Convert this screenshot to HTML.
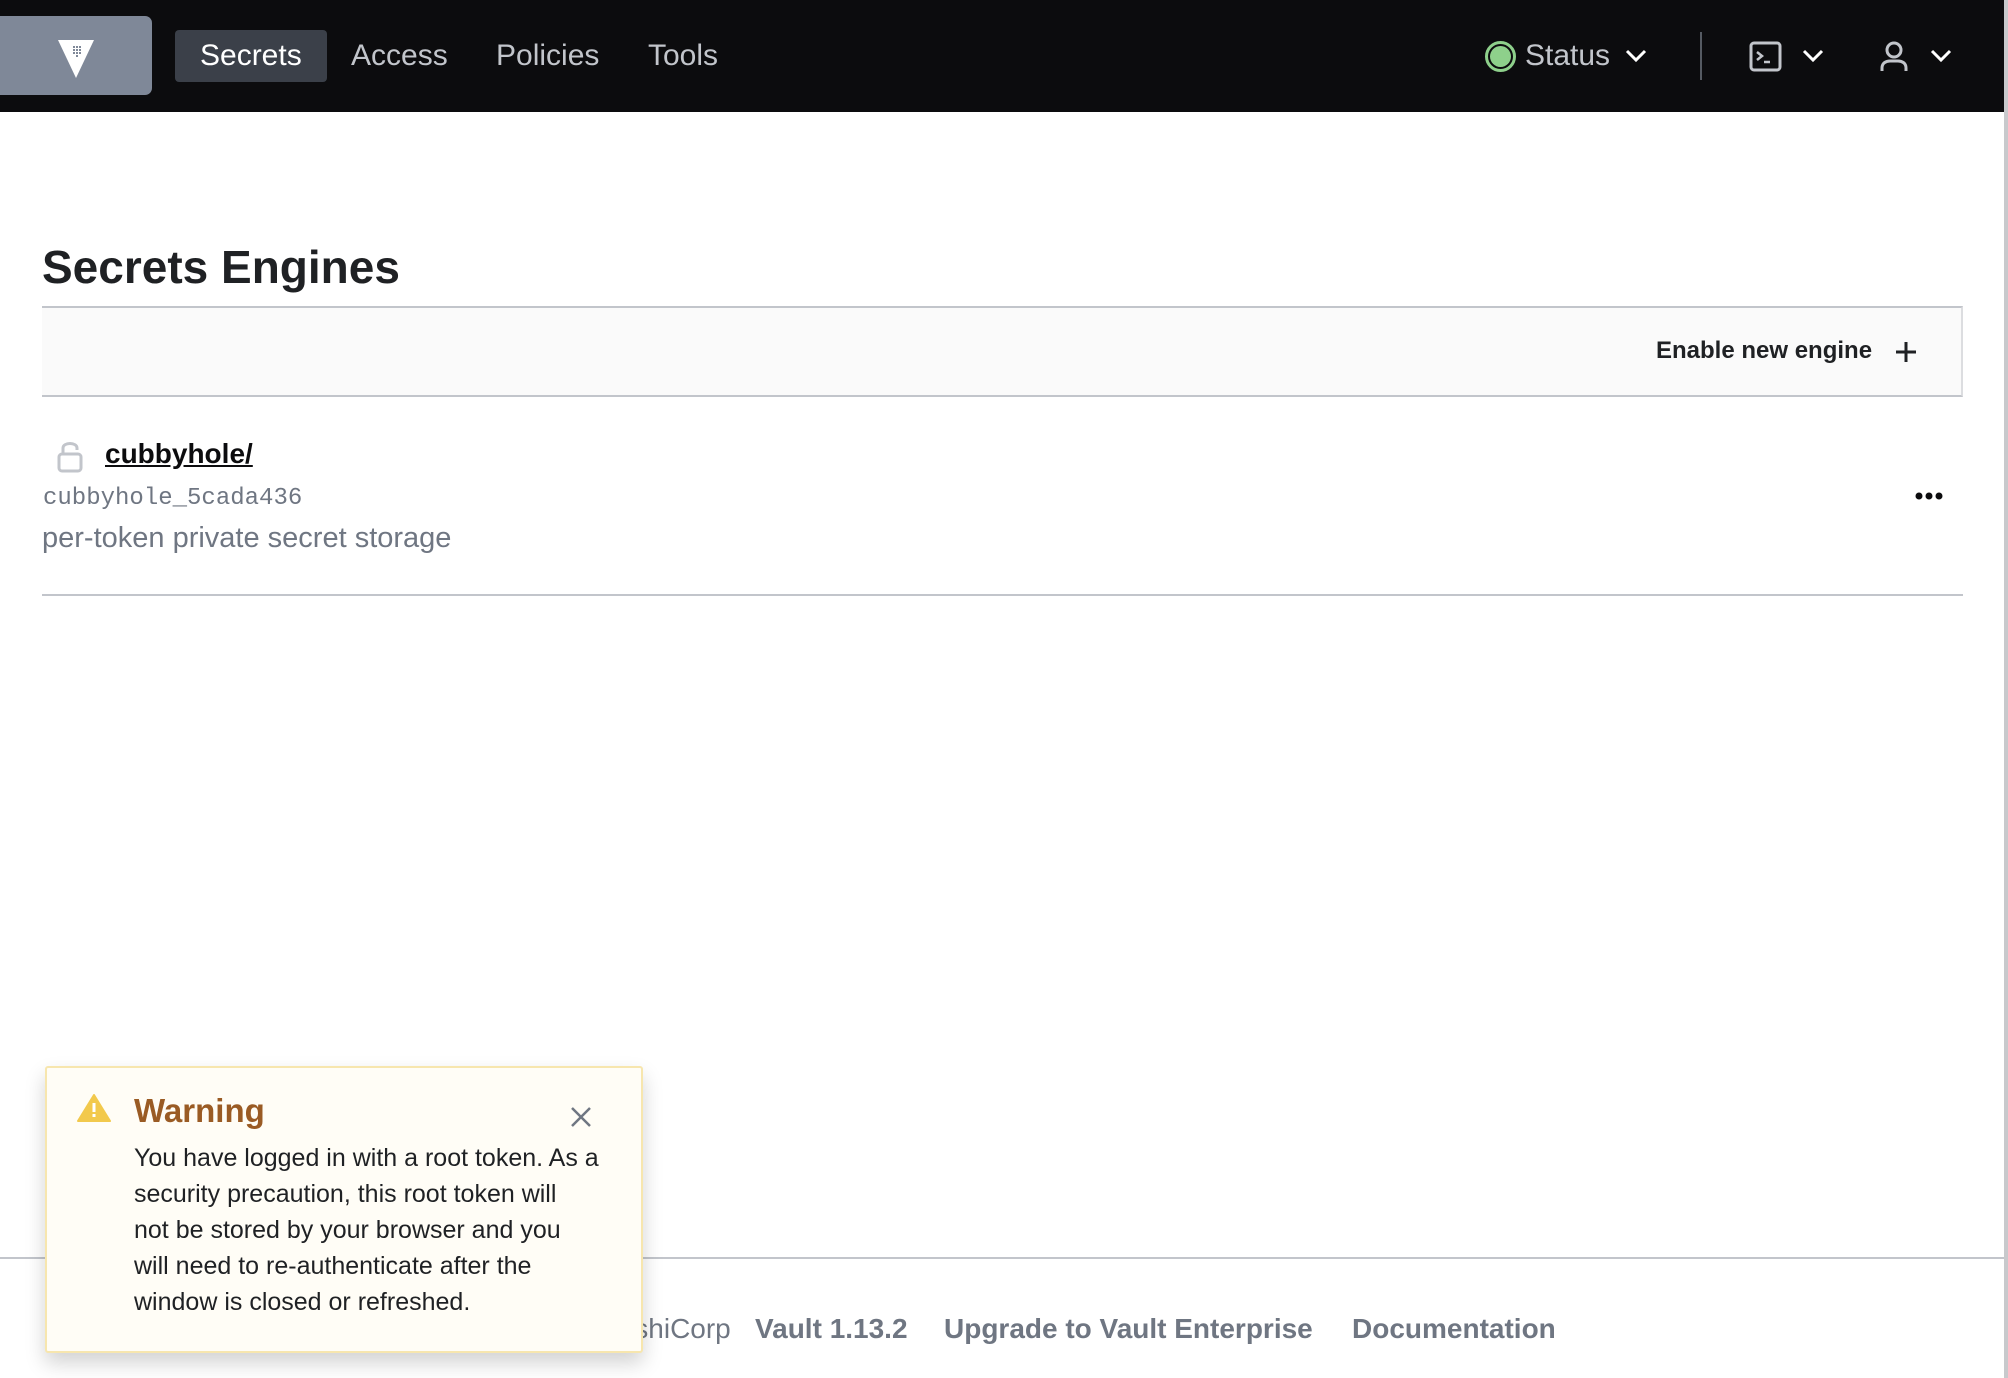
<!DOCTYPE html>
<html><head><meta charset="utf-8"><style>
*{margin:0;padding:0;box-sizing:border-box}
body{width:2008px;height:1378px;position:relative;overflow:hidden;background:#fff;font-family:"Liberation Sans",sans-serif;color:#1f2124}
.a{position:absolute;white-space:nowrap}
.nav{position:absolute;left:0;top:0;width:2004px;height:112px;background:#0c0c0e}
.edge{position:absolute;left:2004px;top:0;width:4px;height:1378px;background:#c8c9cc}
.nt{color:#c2c5cb;font-size:30px;top:39px}
</style></head><body>
<div class="nav">
 <div class="a" style="left:0;top:16px;width:152px;height:79px;background:#7f8898;border-radius:0 7px 7px 0"></div>
 <svg class="a" style="left:56px;top:38px" width="40" height="42" viewBox="0 0 40 42"><path d="M2 2H38L20 40Z" fill="#fff"/><g fill="#7f8898"><rect x="17" y="8" width="2" height="2"/><rect x="20" y="8" width="2" height="2"/><rect x="23" y="8" width="2" height="2"/><rect x="17" y="11" width="2" height="2"/><rect x="20" y="11" width="2" height="2"/><rect x="23" y="11" width="2" height="2"/><rect x="17" y="14" width="2" height="2"/><rect x="20" y="14" width="2" height="2"/><rect x="23" y="14" width="2" height="2"/><rect x="20" y="17" width="2" height="2"/></g></svg>
 <div class="a" style="left:175px;top:30px;width:152px;height:52px;background:#3b4049;border-radius:4px"></div>
 <div class="a nt" style="left:200px;color:#fff">Secrets</div>
 <div class="a nt" style="left:351px">Access</div>
 <div class="a nt" style="left:496px">Policies</div>
 <div class="a nt" style="left:648px">Tools</div>
 <div class="a" style="left:1485px;top:41px;width:31px;height:31px;border-radius:50%;border:3px solid #8ed08b;background:#0c0c0e"></div>
 <div class="a" style="left:1490px;top:46px;width:21px;height:21px;border-radius:50%;background:#8ed08b"></div>
 <div class="a nt" style="left:1525px">Status</div>
 <svg class="a" style="left:1624px;top:46px" width="24" height="18"><path d="M3 5L12 14L21 5" stroke="#fff" stroke-width="3" fill="none"/></svg>
 <div class="a" style="left:1700px;top:32px;width:2px;height:48px;background:#555a62"></div>
 <svg class="a" style="left:1749px;top:41px" width="34" height="31"><rect x="2" y="2" width="29" height="27" rx="3" stroke="#c2c5cb" stroke-width="3" fill="none"/><path d="M8 11L13 15L8 19M15 21H21" stroke="#c2c5cb" stroke-width="2.5" fill="none"/></svg>
 <svg class="a" style="left:1801px;top:46px" width="24" height="18"><path d="M3 5L12 14L21 5" stroke="#fff" stroke-width="3" fill="none"/></svg>
 <svg class="a" style="left:1878px;top:40px" width="32" height="32"><circle cx="16" cy="10" r="7" stroke="#c2c5cb" stroke-width="3" fill="none"/><path d="M4 31V28C4 23 8 21 12 21H20C24 21 28 23 28 28V31" stroke="#c2c5cb" stroke-width="3" fill="none"/></svg>
 <svg class="a" style="left:1929px;top:46px" width="24" height="18"><path d="M3 5L12 14L21 5" stroke="#fff" stroke-width="3" fill="none"/></svg>
</div>
<div class="edge"></div>
<div class="a" style="left:42px;top:240px;font-size:46px;font-weight:bold;color:#1f2124">Secrets Engines</div>
<div class="a" style="left:42px;top:306px;width:1921px;height:91px;background:#fafafa;border-top:2px solid #c2c5cb;border-bottom:2px solid #c2c5cb;border-right:2px solid #dcdde0"></div>
<div class="a" style="left:1656px;top:337px;font-size:24px;font-weight:bold;color:#1f2124">Enable new engine</div>
<svg class="a" style="left:1894px;top:340px" width="24" height="24"><path d="M12 2V22M2 12H22" stroke="#1f2124" stroke-width="3"/></svg>
<svg class="a" style="left:56px;top:439px" width="28" height="34"><path d="M7 14V9C7 3 21 3 21 9V11" stroke="#c2c5cb" stroke-width="3" fill="none"/><rect x="3" y="15" width="22" height="17" rx="3" stroke="#c2c5cb" stroke-width="3" fill="none"/></svg>
<div class="a" style="left:105px;top:438px;font-size:28px;font-weight:bold;text-decoration:underline;color:#0c0c0e">cubbyhole/</div>
<div class="a" style="left:43px;top:485px;font-family:'Liberation Mono',monospace;font-size:24px;color:#6f7682">cubbyhole_5cada436</div>
<div class="a" style="left:42px;top:522px;font-size:29px;color:#6f7682">per-token private secret storage</div>
<svg class="a" style="left:1915px;top:490px" width="28" height="12"><circle cx="4" cy="6" r="3.5" fill="#0c0c0e"/><circle cx="14" cy="6" r="3.5" fill="#0c0c0e"/><circle cx="24" cy="6" r="3.5" fill="#0c0c0e"/></svg>
<div class="a" style="left:42px;top:594px;width:1921px;height:2px;background:#c2c5cb"></div>
<div class="a" style="left:0;top:1257px;width:2004px;height:2px;background:#c2c5cb"></div>
<div class="a" style="left:500px;top:1313px;font-size:28px;color:#6f7682">© 2023 HashiCorp</div>
<div class="a" style="left:755px;top:1313px;font-size:28px;font-weight:bold;color:#6f7682">Vault 1.13.2</div>
<div class="a" style="left:944px;top:1313px;font-size:28px;font-weight:bold;color:#6f7682">Upgrade to Vault Enterprise</div>
<div class="a" style="left:1352px;top:1313px;font-size:28px;font-weight:bold;color:#6f7682">Documentation</div>
<div class="a" style="left:45px;top:1066px;width:598px;height:287px;background:#fffdf6;border:2px solid #f7e6ae;border-radius:3px;box-shadow:0 10px 20px rgba(0,0,0,.18)"></div>
<svg class="a" style="left:77px;top:1093px" width="34" height="30"><path d="M17 2L33 28H1Z" fill="#f2c94c" stroke="#f2c94c" stroke-width="2" stroke-linejoin="round"/><rect x="15.5" y="10" width="3" height="9" fill="#fff"/><rect x="15.5" y="21" width="3" height="3" fill="#fff"/></svg>
<div class="a" style="left:134px;top:1092px;font-size:33px;font-weight:bold;color:#9a5b24">Warning</div>
<svg class="a" style="left:570px;top:1106px" width="22" height="22"><path d="M2 2L20 20M20 2L2 20" stroke="#6f7682" stroke-width="2.5"/></svg>
<div class="a" style="left:134px;top:1140px;font-size:25px;line-height:36px;color:#1f2124;white-space:normal;width:500px">You have logged in with a root token. As a<br>security precaution, this root token will<br>not be stored by your browser and you<br>will need to re-authenticate after the<br>window is closed or refreshed.</div>
</body></html>
